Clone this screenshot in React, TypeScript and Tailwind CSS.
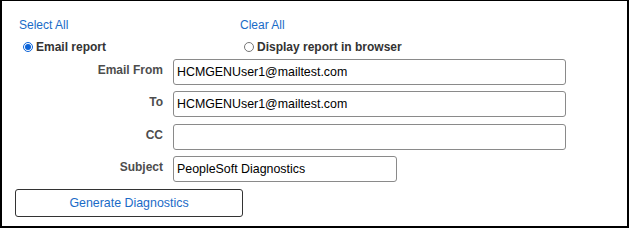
import React from 'react';

function Radio({ checked }: { checked?: boolean }) {
  if (checked) {
    return (
      <span className="flex h-[10px] w-[10px] items-center justify-center rounded-full border border-[#0b63d8] bg-white">
        <span className="h-[6px] w-[6px] rounded-full bg-[#0b63d8]" />
      </span>
    );
  }
  return <span className="h-[10px] w-[10px] rounded-full border border-[#767676] bg-white" />;
}

function Field({ label, value, wide = true }: { label: string; value?: string; wide?: boolean }) {
  return (
    <div className="flex items-start">
      <div className="w-[161px] pt-[4px] text-right text-[12px] font-bold leading-[14px] text-[#4d4d4d]">{label}</div>
      <div
        className={`ml-[10px] flex h-[26px] items-center rounded-[3px] border border-[#8a8a8a] bg-white px-[3px] text-[12.4px] text-black ${
          wide ? 'w-[393px]' : 'w-[224px]'
        }`}
      >
        {value}
      </div>
    </div>
  );
}

export default function App() {
  return (
    <div className="h-[228px] w-[629px] border-b-2 border-l-2 border-r-2 border-t border-black bg-white font-['Liberation_Sans',Arial,sans-serif]">
      <div className="grid grid-cols-[221px_1fr] pl-[17px] pt-[17px] text-[12px] leading-[14px] text-[#1a6bc7]">
        <span>Select All</span>
        <span>Clear All</span>
      </div>

      <div className="mt-2 grid grid-cols-[221px_1fr] pl-[21px] text-[12px] font-bold leading-[14px] text-[#333]">
        <label className="flex items-center gap-[3px]">
          <Radio checked />
          Email report
        </label>
        <label className="flex items-center gap-[3px]">
          <Radio />
          Display report in browser
        </label>
      </div>

      <div className="mt-[5px] flex flex-col">
        <Field label="Email From" value="HCMGENUser1@mailtest.com" />
        <div className="mt-[6px]">
          <Field label="To" value="HCMGENUser1@mailtest.com" />
        </div>
        <div className="mt-[7px]">
          <Field label="CC" />
        </div>
        <div className="mt-[6px]">
          <Field label="Subject" value="PeopleSoft Diagnostics" wide={false} />
        </div>
      </div>

      <button className="ml-[13px] mt-[7px] flex h-[28px] w-[228px] items-center justify-center rounded-[3px] border border-[#333] bg-white text-[12.4px] text-[#1a6bc7]">
        Generate Diagnostics
      </button>
    </div>
  );
}
